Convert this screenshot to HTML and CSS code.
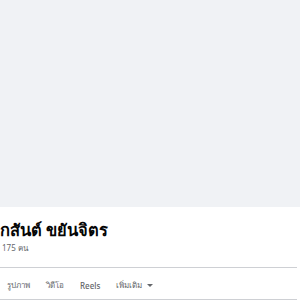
FILE: index.html
```html
<!DOCTYPE html>
<html lang="th">
<head>
<meta charset="utf-8">
<link rel="stylesheet" href="styles.css">
</head>
<body>
<div class="cover"></div>
<div class="profile">
  <div class="info">
    <h1 class="name">กสันต์ ขยันจิตร</h1>
    <div class="friends">175 คน</div>
  </div>
  <div class="tabs">
    <span class="tab">รูปภาพ</span>
    <span class="tab">วิดีโอ</span>
    <span class="tab">Reels</span>
    <span class="tab">เพิ่มเติม <span class="caret"></span></span>
  </div>
</div>
</body>
</html>
```
FILE: styles.css
```css
body {
margin:0;
background-color:#ffffff;
font-family:"Noto Sans","DejaVu Sans",sans-serif;
}
.cover {
height:207px;
background-color:#f0f2f5;
}
.profile {
padding-right:3px;
}
.info {
height:60px;
border-bottom:1px solid #ced0d4;
}
.name {
margin:0;
padding-top:12px;
font-size:16.5px;
font-weight:bold;
line-height:22px;
color:#050505;
}
.friends {
font-size:8px;
line-height:14px;
color:#65676b;
padding-left:2px;
}
.tabs {
display:flex;
height:32px;
align-items:center;
border-bottom:1px solid #ced0d4;
padding-left:7px;
padding-top:3px;
box-sizing:border-box;
gap:16px;
}
.tab {
font-size:8px;
font-weight:500;
color:#65676b;
}
.caret {
display:inline-block;
width:0;
height:0;
margin-left:3px;
vertical-align:middle;
border-left:3px solid transparent;
border-right:3px solid transparent;
border-top:3px solid #65676b;
}
```
